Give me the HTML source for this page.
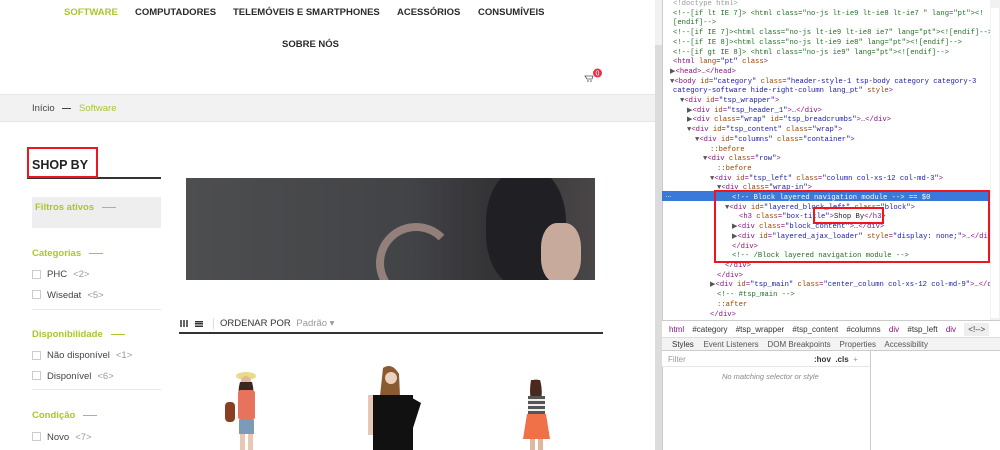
<!DOCTYPE html>
<html><head><meta charset="utf-8"><style>
*{margin:0;padding:0;box-sizing:border-box}
body{width:1000px;height:450px;overflow:hidden;background:#fff;font-family:"Liberation Sans",sans-serif;position:relative}
.a{position:absolute;white-space:nowrap}
.nav{font-weight:bold;font-size:9.5px;color:#2a2a2a}
.g{color:#a9c62f}
.fh{font-weight:bold;font-size:9.5px;color:#a9c62f}
.fh:after{content:"";display:inline-block;width:14px;height:1px;background:#a9c62f;vertical-align:middle;margin-left:8px}
.cb{width:9px;height:9px;border:1px solid #ccc}
.it{font-size:9.5px;color:#444}
.it span{color:#999;margin-left:6px}
.dt{font-family:"Liberation Mono",monospace;font-size:7.2px;line-height:9.7px;color:#881280}
.cm{color:#236e25}
.at{color:#994500}
.av{color:#1a1aa6}
.tg{color:#881280}
.gr{color:#999}
</style></head><body>
<div class="a nav g" style="left:64px;top:7px">SOFTWARE</div>
<div class="a nav" style="left:135px;top:7px">COMPUTADORES</div>
<div class="a nav" style="left:233px;top:7px">TELEMÓVEIS E SMARTPHONES</div>
<div class="a nav" style="left:397px;top:7px">ACESSÓRIOS</div>
<div class="a nav" style="left:478px;top:7px">CONSUMÍVEIS</div>
<div class="a nav" style="left:282px;top:39px">SOBRE NÓS</div>
<svg class="a" style="left:584px;top:68px" width="22" height="16"><path d="M1 8h8l-1 3H3z" fill="none" stroke="#555" stroke-width="0.8"/><circle cx="4" cy="13" r=".8" fill="#555"/><circle cx="7" cy="13" r=".8" fill="#555"/><circle cx="13.5" cy="5" r="4.5" fill="#e8304a"/><text x="13.5" y="7.5" font-size="7" fill="#fff" text-anchor="middle" font-family="Liberation Sans">0</text></svg>
<div class="a" style="left:0;top:94px;width:655px;height:28px;background:#f2f2f2;border-top:1px solid #e6e6e6;border-bottom:1px solid #e4e4e4"></div>
<div class="a" style="left:32px;top:103px;font-size:9.5px;color:#444">Início <span style="display:inline-block;width:9px;height:1px;background:#444;vertical-align:middle;margin:0 5px"></span> <span class="g">Software</span></div>
<div class="a" style="left:27px;top:177px;width:134px;height:1.5px;background:#333"></div>
<div class="a" style="left:27px;top:147px;width:71px;height:31px;border:2px solid #f0141e"></div>
<div class="a" style="left:32px;top:158px;font-weight:bold;font-size:12.5px;color:#222">SHOP BY</div>
<div class="a" style="left:32px;top:197px;width:129px;height:31px;background:#eee"></div>
<div class="a fh" style="left:35px;top:202px">Filtros ativos</div>
<div class="a fh" style="left:32px;top:248px">Categorias</div>
<div class="a cb" style="left:32px;top:270px"></div><div class="a it" style="left:47px;top:269px">PHC<span>&lt;2&gt;</span></div>
<div class="a cb" style="left:32px;top:290px"></div><div class="a it" style="left:47px;top:290px">Wisedat<span>&lt;5&gt;</span></div>
<div class="a" style="left:32px;top:309px;width:129px;height:1px;background:#e8e8e8"></div>
<div class="a fh" style="left:32px;top:329px">Disponibilidade</div>
<div class="a cb" style="left:32px;top:351px"></div><div class="a it" style="left:47px;top:350px">Não disponível<span>&lt;1&gt;</span></div>
<div class="a cb" style="left:32px;top:371px"></div><div class="a it" style="left:47px;top:371px">Disponível<span>&lt;6&gt;</span></div>
<div class="a" style="left:32px;top:389px;width:129px;height:1px;background:#e8e8e8"></div>
<div class="a fh" style="left:32px;top:410px">Condição</div>
<div class="a cb" style="left:32px;top:432px"></div><div class="a it" style="left:47px;top:432px">Novo<span>&lt;7&gt;</span></div>
<div class="a" style="left:186px;top:178px;width:409px;height:102px;background:linear-gradient(90deg,#4d4e50 0%,#424346 55%,#333336 75%,#4a4647 100%);overflow:hidden">
<div style="position:absolute;left:300px;top:-10px;width:80px;height:120px;border-radius:45%;background:#202024"></div>
<div style="position:absolute;left:190px;top:45px;width:80px;height:80px;border:8px solid #a89088;border-radius:50%;border-right-color:transparent;border-bottom-color:transparent;opacity:.8"></div>
<div style="position:absolute;left:355px;top:45px;width:40px;height:60px;border-radius:40%;background:#c8aa9c"></div>
</div>
<div class="a" style="left:180px;top:320px;width:8px;height:7px;background:repeating-linear-gradient(90deg,#666 0 2px,#fff 2px 3px)"></div>
<div class="a" style="left:195px;top:320px;width:8px;height:7px;background:repeating-linear-gradient(0deg,#333 0 1.5px,#fff 1.5px 2.3px)"></div>
<div class="a" style="left:213px;top:318px;width:1px;height:11px;background:#ddd"></div>
<div class="a" style="left:220px;top:318px;font-size:9.5px;color:#333">ORDENAR POR <span style="color:#999;margin-left:3px">Padrão ▾</span></div>
<div class="a" style="left:179px;top:332px;width:424px;height:2px;background:#333"></div>
<svg class="a" style="left:170px;top:350px" width="430" height="100">
<g><ellipse cx="76" cy="26" rx="10" ry="4" fill="#e8dc8c"/><circle cx="76" cy="31" r="5" fill="#e0b8a0"/><path d="M70 32q-3 10 0 22h12q3-12 0-22z" fill="#3a2820"/><rect x="68" y="40" width="17" height="30" rx="3" fill="#e8735c"/><rect x="55" y="52" width="10" height="20" rx="4" fill="#8a4020"/><rect x="69" y="70" width="15" height="14" fill="#7d9ab8"/><rect x="70" y="84" width="5" height="16" fill="#e8c8b4"/><rect x="78" y="84" width="5" height="16" fill="#e8c8b4"/></g>
<g><path d="M213 18q9-6 16 6l1 22h-20z" fill="#8a5a30"/><circle cx="221" cy="28" r="6" fill="#ecd0c0"/><rect x="203" y="45" width="40" height="55" fill="#111"/><path d="M237 45l14 8-8 25z" fill="#111"/><rect x="198" y="45" width="5" height="40" fill="#e8c8b4"/></g>
<g><circle cx="366" cy="34" r="5" fill="#d8a890"/><path d="M361 30q-2 12 0 20h10q2-10-1-20z" fill="#4a2820"/><rect x="358" y="46" width="17" height="18" fill="#555"/><rect x="358" y="49" width="17" height="2" fill="#eee"/><rect x="358" y="54" width="17" height="2" fill="#eee"/><rect x="358" y="59" width="17" height="2" fill="#eee"/><path d="M357 64h19l4 25h-27z" fill="#f07048"/><rect x="360" y="89" width="5" height="11" fill="#e0b8a0"/><rect x="368" y="89" width="5" height="11" fill="#e0b8a0"/></g>
</svg>
<div class="a" style="left:655px;top:0;width:7px;height:450px;background:#f1f1f1"></div>
<div class="a" style="left:655px;top:45px;width:7px;height:405px;background:#dcdcdc"></div>
<div class="a" style="left:662px;top:0;width:338px;height:450px;background:#fff;border-left:1px solid #ccc"></div>
<div class="a" style="left:662px;top:191px;width:328px;height:10px;background:#3879d9"></div>
<div class="a dt" style="left:673px;top:0px">
<div class="gr">&lt;!doctype html&gt;</div>
<div class="cm">&lt;!--[if lt IE 7]&gt; &lt;html class="no-js lt-ie9 lt-ie8 lt-ie7 " lang="pt"&gt;&lt;!</div>
<div class="cm">[endif]--&gt;</div>
<div class="cm">&lt;!--[if IE 7]&gt;&lt;html class="no-js lt-ie9 lt-ie8 ie7" lang="pt"&gt;&lt;![endif]--&gt;</div>
<div class="cm">&lt;!--[if IE 8]&gt;&lt;html class="no-js lt-ie9 ie8" lang="pt"&gt;&lt;![endif]--&gt;</div>
<div class="cm">&lt;!--[if gt IE 8]&gt; &lt;html class="no-js ie9" lang="pt"&gt;&lt;![endif]--&gt;</div>
<div>&lt;html <span class="at">lang</span>=<span class="av">"pt"</span> <span class="at">class</span>&gt;</div>
<div style="margin-left:-3px"><span style="color:#555">▶</span>&lt;head&gt;…&lt;/head&gt;</div>
<div style="margin-left:-3px"><span style="color:#555">▼</span>&lt;body <span class="at">id</span>=<span class="av">"category"</span> <span class="at">class</span>=<span class="av">"header-style-1  tsp-body category category-3</span></div>
<div><span class="av">category-software hide-right-column lang_pt"</span> <span class="at">style</span>&gt;</div>
<div style="margin-left:7px"><span style="color:#555">▼</span>&lt;div <span class="at">id</span>=<span class="av">"tsp_wrapper"</span>&gt;</div>
<div style="margin-left:14px"><span style="color:#555">▶</span>&lt;div <span class="at">id</span>=<span class="av">"tsp_header_1"</span>&gt;…&lt;/div&gt;</div>
<div style="margin-left:14px"><span style="color:#555">▶</span>&lt;div <span class="at">class</span>=<span class="av">"wrap"</span> <span class="at">id</span>=<span class="av">"tsp_breadcrumbs"</span>&gt;…&lt;/div&gt;</div>
<div style="margin-left:14px"><span style="color:#555">▼</span>&lt;div <span class="at">id</span>=<span class="av">"tsp_content"</span> <span class="at">class</span>=<span class="av">"wrap"</span>&gt;</div>
<div style="margin-left:22px"><span style="color:#555">▼</span>&lt;div <span class="at">id</span>=<span class="av">"columns"</span> <span class="at">class</span>=<span class="av">"container"</span>&gt;</div>
<div style="margin-left:37px" class="at">::before</div>
<div style="margin-left:30px"><span style="color:#555">▼</span>&lt;div <span class="at">class</span>=<span class="av">"row"</span>&gt;</div>
<div style="margin-left:44px" class="at">::before</div>
<div style="margin-left:37px"><span style="color:#555">▼</span>&lt;div <span class="at">id</span>=<span class="av">"tsp_left"</span> <span class="at">class</span>=<span class="av">"column col-xs-12 col-md-3"</span>&gt;</div>
<div style="margin-left:44px"><span style="color:#555">▼</span>&lt;div <span class="at">class</span>=<span class="av">"wrap-in"</span>&gt;</div>
<div style="margin-left:59px;color:#fff">&lt;!-- Block layered navigation module --&gt; == $0</div>
<div style="margin-left:52px"><span style="color:#555">▼</span>&lt;div <span class="at">id</span>=<span class="av">"layered_block_left"</span> <span class="at">class</span>=<span class="av">"block"</span>&gt;</div>
<div style="margin-left:66px">&lt;h3 <span class="at">class</span>=<span class="av">"box-title"</span>&gt;<span style="color:#222">Shop By</span>&lt;/h3&gt;</div>
<div style="margin-left:59px"><span style="color:#555">▶</span>&lt;div <span class="at">class</span>=<span class="av">"block_content"</span>&gt;…&lt;/div&gt;</div>
<div style="margin-left:59px"><span style="color:#555">▶</span>&lt;div <span class="at">id</span>=<span class="av">"layered_ajax_loader"</span> <span class="at">style</span>=<span class="av">"display: none;"</span>&gt;…&lt;/div&gt;</div>
<div style="margin-left:59px">&lt;/div&gt;</div>
<div style="margin-left:59px" class="cm">&lt;!-- /Block layered navigation module --&gt;</div>
<div style="margin-left:52px">&lt;/div&gt;</div>
<div style="margin-left:44px">&lt;/div&gt;</div>
<div style="margin-left:37px"><span style="color:#555">▶</span>&lt;div <span class="at">id</span>=<span class="av">"tsp_main"</span> <span class="at">class</span>=<span class="av">"center_column col-xs-12 col-md-9"</span>&gt;…&lt;/div&gt;</div>
<div style="margin-left:44px" class="cm">&lt;!-- #tsp_main --&gt;</div>
<div style="margin-left:44px" class="at">::after</div>
<div style="margin-left:37px">&lt;/div&gt;</div>
</div>
<div class="a" style="left:665px;top:192px;font-size:7px;color:#fff">…</div>
<div class="a" style="left:714px;top:190px;width:276px;height:73px;border:2px solid #f0141e"></div>
<div class="a" style="left:813px;top:207px;width:71px;height:17px;border:2px solid #f0141e"></div>
<div class="a" style="left:990px;top:0;width:10px;height:320px;background:#f1f1f1"></div>
<div class="a" style="left:991px;top:8px;width:8px;height:310px;background:#fff"></div>
<div class="a" style="left:662px;top:320px;width:338px;height:18px;background:#fff;border-top:1px solid #ccc;border-bottom:1px solid #ddd;font-size:8px;color:#333;padding:4px 0 0 7px;word-spacing:6px"><span class="tg">html</span> #category #tsp_wrapper #tsp_content #columns <span class="tg">div</span> #tsp_left <span class="tg">div</span> <span style="background:#eee;padding:2px 4px">&lt;!--&gt;</span></div>
<div class="a" style="left:662px;top:338px;width:338px;height:13px;background:#f3f3f3;border-bottom:1px solid #ccc;font-size:8px;color:#555;padding:2px 0 0 7px"><span style="color:#333;border-bottom:2px solid #3879d9;padding:0 3px 2px 3px">Styles</span>&nbsp;&nbsp; Event Listeners &nbsp;&nbsp; DOM Breakpoints &nbsp;&nbsp; Properties &nbsp;&nbsp; Accessibility</div>
<div class="a" style="left:662px;top:351px;width:208px;height:16px;background:#fff;border-bottom:1px solid #e6e6e6;font-size:8px;color:#999;padding:4px 0 0 6px">Filter<span style="position:absolute;left:152px;color:#333;font-weight:bold">:hov &nbsp;.cls &nbsp;<span style="color:#999;font-weight:normal">+</span></span></div>
<div class="a" style="left:870px;top:351px;width:1px;height:99px;background:#ccc"></div>
<div class="a" style="left:722px;top:372px;font-size:7.5px;font-style:italic;color:#888">No matching selector or style</div>
</body></html>
